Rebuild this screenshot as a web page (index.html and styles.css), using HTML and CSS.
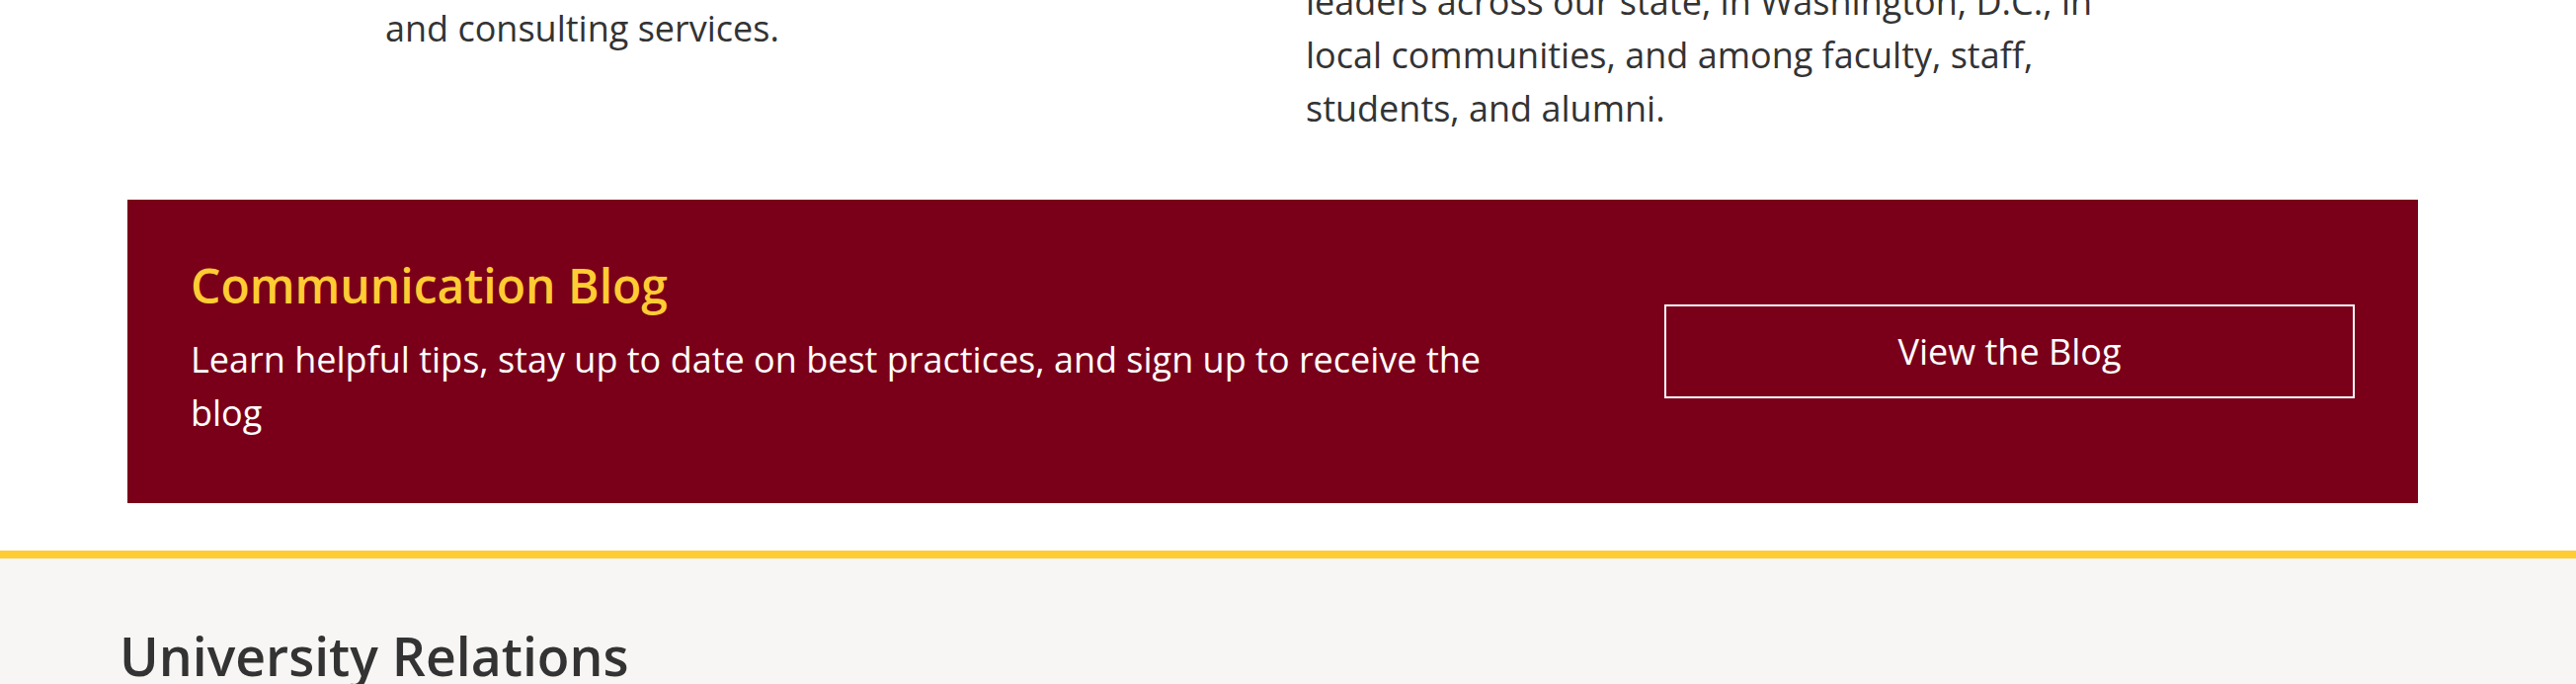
FILE: index.html
```html
<!DOCTYPE html>
<html>

<head>
  <title>University Relations</title>
  <link rel="stylesheet" href="styles.css">
</head>

<body>
  <div class="services">
    <div class="service service-left">
      <p class="service-text">and consulting services.</p>
    </div>
    <div class="service service-right">
      <p class="service-text">leaders across our state, in Washington, D.C., in local communities, and among faculty, staff, students, and alumni.</p>
    </div>
  </div>

  <div class="blog-banner">
    <div class="blog-info">
      <h2 class="blog-title">Communication Blog</h2>
      <p class="blog-desc">Learn helpful tips, stay up to date on best practices, and sign up to receive the blog</p>
    </div>
    <a class="blog-button" href="#">View the Blog</a>
  </div>

  <div class="footer-area">
    <h2 class="footer-title">University Relations</h2>
  </div>
</body>

</html>
```
FILE: styles.css
```css
body {
  margin: 0;
  background-color: #ffffff;
  color: #333333;
  font-family: "Open Sans", "Liberation Sans", sans-serif;
}

.services {
  display: flex;
  align-items: flex-start;
  margin-top: -25px;
}

.service-text {
  margin: 0;
  font-size: 36px;
  line-height: 54px;
}

.service-left {
  width: 1322px;
  padding-left: 390px;
  padding-top: 27px;
  box-sizing: border-box;
}

.service-right {
  width: 840px;
}

.blog-banner {
  display: flex;
  align-items: center;
  justify-content: space-between;
  margin: 65px 160px 0 129px;
  height: 307px;
  padding: 0 64px;
  background-color: #7a0019;
}

.blog-info {
  width: 1340px;
  margin-top: -6px;
}

.blog-title {
  margin: 0 0 20px 0;
  color: #ffcc33;
  font-size: 48px;
  font-weight: 600;
  line-height: 1.2;
}

.blog-desc {
  margin: 0;
  color: #ffffff;
  font-size: 36px;
  line-height: 54px;
}

.blog-button {
  display: flex;
  align-items: center;
  justify-content: center;
  width: 699px;
  height: 95px;
  box-sizing: border-box;
  border: 2px solid #ffffff;
  color: #ffffff;
  font-size: 36px;
  text-decoration: none;
}

.footer-area {
  margin-top: 48px;
  border-top: 8px solid #ffcc33;
  background-color: #f7f6f4;
  padding: 67px 121px 60px;
}

.footer-title {
  margin: 0;
  color: #333333;
  font-size: 53.5px;
  font-weight: 600;
  line-height: 1.2;
}
```
